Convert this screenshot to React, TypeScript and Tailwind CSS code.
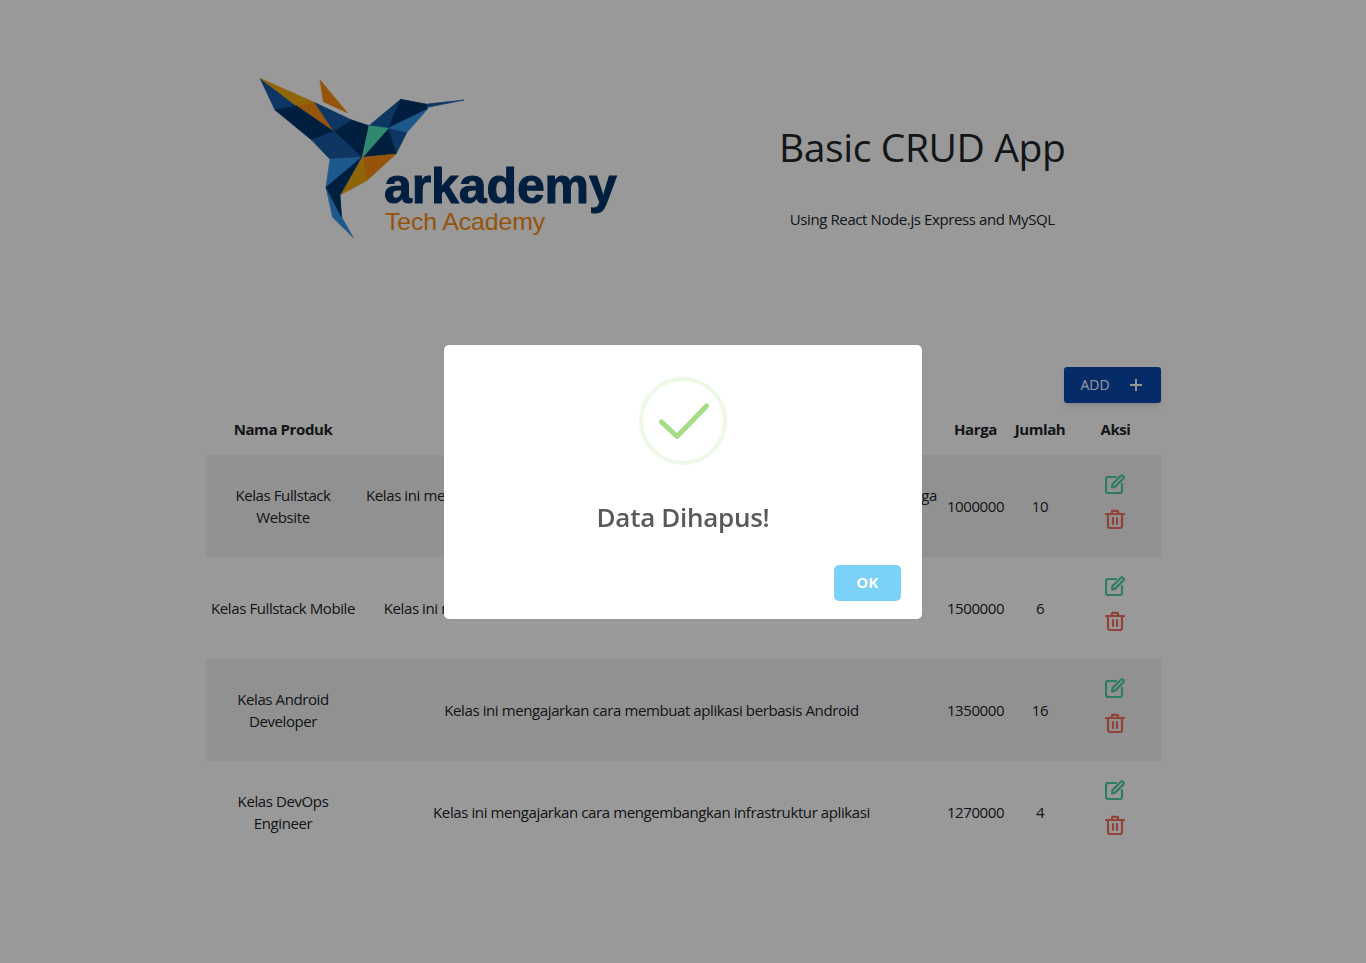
import { Plus } from 'lucide-react';

const products = [
  {
    name: 'Kelas Fullstack Website',
    desc: 'Kelas ini mengajarkan cara membuat situs web dari sisi frontend serta backend hingga deploy',
    price: 1000000,
    qty: 10,
  },
  {
    name: 'Kelas Fullstack Mobile',
    desc: 'Kelas ini mengajarkan cara membuat aplikasi mobile bagi Android dan iOS terkini',
    price: 1500000,
    qty: 6,
    oneLine: true,
  },
  {
    name: 'Kelas Android Developer',
    desc: 'Kelas ini mengajarkan cara membuat aplikasi berbasis Android',
    price: 1350000,
    qty: 16,
  },
  {
    name: 'Kelas DevOps Engineer',
    desc: 'Kelas ini mengajarkan cara mengembangkan infrastruktur aplikasi',
    price: 1270000,
    qty: 4,
  },
];

const DARK = '#003469';
const MID = '#165aa6';
const LIGHT = '#3093e8';
const ORANGE = '#f88c10';
const AMBER = '#f0a80e';

const shards: [string, string][] = [
  ['60,55 105,150 170,138', MID],
  ['60,55 225,128 170,138', AMBER],
  ['170,138 225,128 282,215', ORANGE],
  ['105,150 170,138 282,215 215,240', DARK],
  ['225,128 335,180 282,215', MID],
  ['240,60 322,158 250,125', ORANGE],
  ['335,180 387,197 365,292 282,215', DARK],
  ['215,240 282,215 365,292 270,298', MID],
  ['387,197 482,118 445,205', MID],
  ['482,118 562,133 562,148 445,205', DARK],
  ['562,132 672,120 562,142', MID],
  ['445,205 562,148 500,218', LIGHT],
  ['445,205 500,218 468,282', MID],
  ['445,205 468,282 368,292', DARK],
  ['387,197 445,205 368,292', '#4ce6b4'],
  ['368,292 468,282 380,362', ORANGE],
  ['368,292 380,362 300,405', AMBER],
  ['270,298 365,292 258,382', LIGHT],
  ['365,292 300,405 258,382', DARK],
  ['258,382 278,472 305,472', LIGHT],
  ['258,382 300,405 305,472', DARK],
  ['278,472 305,472 340,533', LIGHT],
];

const Logo = () => (
  <svg viewBox="0 0 1200 570" className="w-[400px] h-[190px] ml-[34px] block">
    {shards.map(([points, fill]) => (
      <polygon key={points} points={points} fill={fill} stroke={fill} strokeWidth="2" strokeLinejoin="round" />
    ))}
    <text x="432" y="430" textLength="698" lengthAdjust="spacingAndGlyphs" fill={DARK} stroke={DARK} strokeWidth="3" fontSize="150" fontWeight="700" fontFamily="Liberation Sans, sans-serif">
      arkademy
    </text>
    <text x="435" y="510" textLength="480" lengthAdjust="spacingAndGlyphs" fill={ORANGE} fontSize="72" fontFamily="Liberation Sans, sans-serif">
      Tech Academy
    </text>
  </svg>
);

const EditIcon = () => (
  <svg viewBox="0 0 20 20" className="w-5 h-5 text-[#4ed1a2]" fill="none" stroke="currentColor" strokeWidth="2.2" strokeLinecap="round" strokeLinejoin="round">
    <path d="M11 3H3a2 2 0 0 0-2 2v12a2 2 0 0 0 2 2h12a2 2 0 0 0 2-2v-7" />
    <path d="M7 13.5 7.6 10 15.8 1.8a1.5 1.5 0 0 1 2.2 0l.4.4a1.5 1.5 0 0 1 0 2.2L10.2 12.6Z" />
  </svg>
);

const TrashIcon = () => (
  <svg viewBox="0 0 20 20" className="w-5 h-5 text-[#f0705a]" fill="none" stroke="currentColor" strokeWidth="2.2" strokeLinecap="round" strokeLinejoin="round">
    <path d="M1 5h18" />
    <path d="M6.5 5l.8-3.2h5.4l.8 3.2" />
    <path d="M3 5v12a2 2 0 0 0 2 2h10a2 2 0 0 0 2-2V5" />
    <path d="M8 9v6M12 9v6" />
  </svg>
);

const App = () => {
  return (
    <div className="relative min-h-[963px] bg-white text-[#212529] font-['Open_Sans',sans-serif] text-[15px] tracking-[-0.4px]">
      <div className="w-[955px] ml-[206px] pt-[60px]">
        <div className="grid grid-cols-2">
          <Logo />
          <div className="flex flex-col items-center">
            <h1 className="mt-[59px] text-[39px] leading-[56px] tracking-[-0.4px]">Basic CRUD App</h1>
            <p className="mt-[33px] leading-[22px]">Using React Node.js Express and MySQL</p>
          </div>
        </div>

        <div className="flex justify-end mt-[117px]">
          <button className="flex items-center justify-center gap-[17px] w-[97px] h-9 rounded-[3px] bg-[#0a49b0] text-white text-sm tracking-normal shadow-md">
            ADD
            <Plus size={18} strokeWidth={2.5} />
          </button>
        </div>

        <table className="w-full table-fixed border-collapse text-center">
          <colgroup>
            <col className="w-[154px]" />
            <col />
            <col className="w-[65px]" />
            <col className="w-[64px]" />
            <col className="w-[89px]" />
          </colgroup>
          <thead>
            <tr className="h-[52px] font-bold">
              <th>Nama Produk</th>
              <th></th>
              <th>Harga</th>
              <th>Jumlah</th>
              <th className="pr-[2px]">Aksi</th>
            </tr>
          </thead>
          <tbody className="leading-[22px]">
            {products.map((p) => (
              <tr key={p.name} className="h-[102px] odd:bg-black/5">
                <td className={p.oneLine ? 'whitespace-nowrap' : 'px-1'}>{p.name}</td>
                <td className="px-1">{p.desc}</td>
                <td>{p.price}</td>
                <td>{p.qty}</td>
                <td className="pr-1">
                  <div className="flex flex-col items-center gap-[15px] mb-[9px]">
                    <EditIcon />
                    <TrashIcon />
                  </div>
                </td>
              </tr>
            ))}
          </tbody>
        </table>
      </div>

      {/* Alert overlay */}
      <div className="fixed inset-0 bg-black/40 flex items-center justify-center">
        <div className="w-[478px] h-[274px] bg-white rounded-[5px] flex flex-col items-center pt-8">
          <div className="w-[88px] h-[88px] rounded-full border-4 border-[#edf8e7] flex items-center justify-center">
            <svg viewBox="0 0 88 88" className="w-[88px] h-[88px] shrink-0">
              <path d="M22.5 45 L38 59.5 L67.5 29" fill="none" stroke="#a5dc86" strokeWidth="5" strokeLinecap="round" strokeLinejoin="round" />
            </svg>
          </div>
          <div className="mt-[34px] text-[26px] leading-9 font-semibold text-[#595959] tracking-[-0.3px]">Data Dihapus!</div>
          <div className="w-full flex justify-end pr-[21px] mt-[30px]">
            <button className="w-[67px] h-9 rounded-[5px] bg-[#7cd1f9] text-white font-bold text-[15px] tracking-normal">OK</button>
          </div>
        </div>
      </div>
    </div>
  );
};

export default App;
